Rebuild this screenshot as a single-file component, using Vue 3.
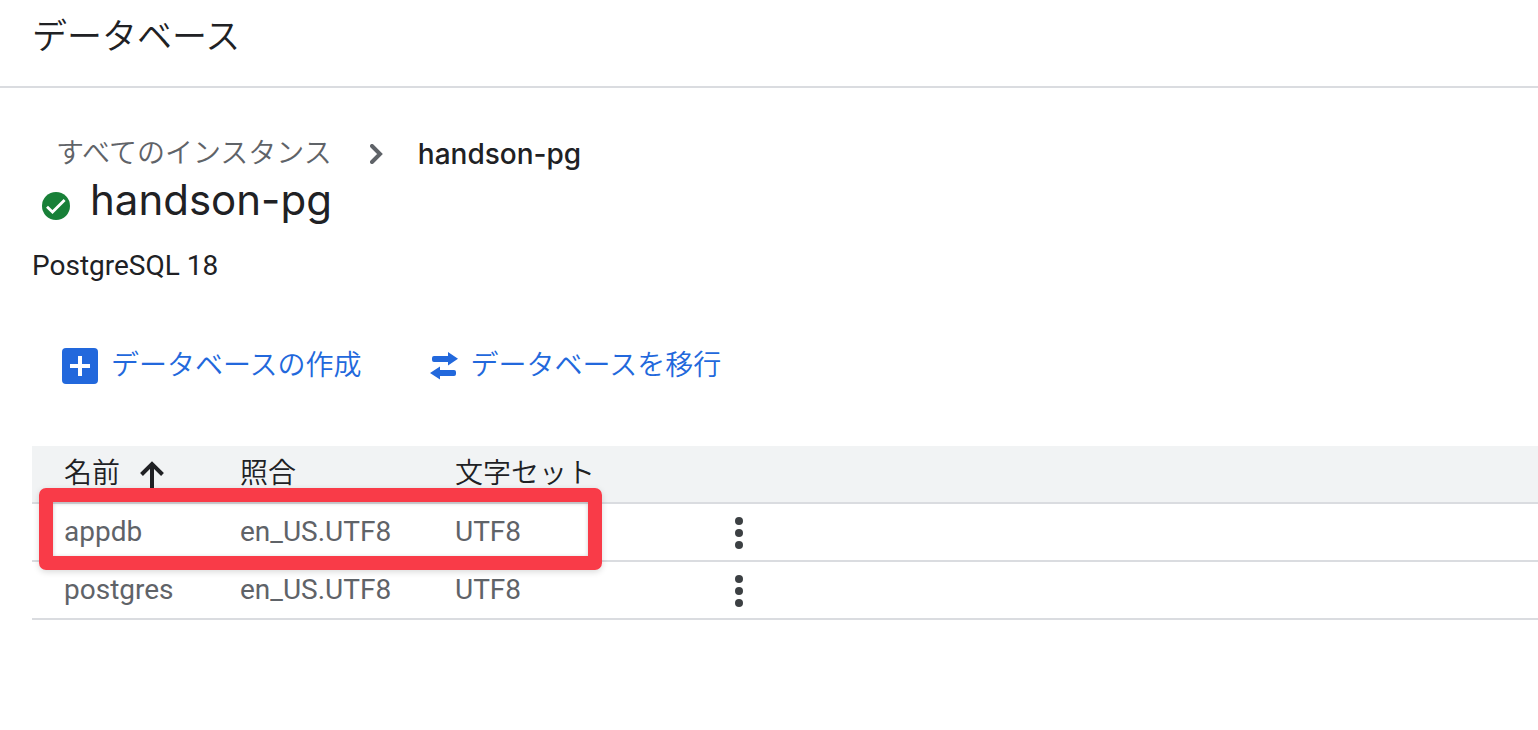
<script setup>
const databases = [
  { name: 'appdb', collation: 'en_US.UTF8', charset: 'UTF8' },
  { name: 'postgres', collation: 'en_US.UTF8', charset: 'UTF8' },
]
</script>

<template>
  <div class="page">
    <header class="topbar">
      <h1>データベース</h1>
    </header>

    <main>
      <nav class="crumbs" aria-label="パンくずリスト">
        <a href="#">すべてのインスタンス</a>
        <svg class="chevron" viewBox="0 0 14 20" width="14" height="20" aria-hidden="true">
          <path d="M2 2L10 10L2 18" fill="none" stroke="#5f6368" stroke-width="4" stroke-linecap="round" />
        </svg>
        <span class="current">handson-pg</span>
      </nav>

      <div class="instance">
        <svg viewBox="0 0 28 28" width="28" height="28" aria-hidden="true">
          <circle cx="14" cy="14" r="14" fill="#188038" />
          <path d="M5 14.8L10.500 20L22.600 8" fill="none" stroke="#fff" stroke-width="2.8" />
        </svg>
        <h2>handson-pg</h2>
      </div>
      <p class="version">PostgreSQL 18</p>

      <div class="actions">
        <button type="button">
          <svg viewBox="0 0 36 36" width="36" height="36" aria-hidden="true">
            <rect width="36" height="36" rx="4" fill="#2268dc" />
            <path d="M18 8V28M8 18H28" stroke="#fff" stroke-width="4" />
          </svg>
          データベースの作成
        </button>
        <button type="button">
          <svg viewBox="0 0 28 28" width="28" height="28" aria-hidden="true">
            <path d="M4 4H18V0L28 6.800L18 13.500V10H4Q2 10 2 8V6Q2 4 4 4Z" fill="#2268dc" />
            <path d="M24 24H10V27.500L0 21L10 14.500V18H24Q26 18 26 20V22Q26 24 24 24Z" fill="#2268dc" />
          </svg>
          データベースを移行
        </button>
      </div>

      <div class="table-area">
        <table>
          <thead>
            <tr>
              <th class="name" scope="col" aria-sort="ascending">
                <button class="sort" type="button">
                  名前
                  <svg viewBox="0 0 24 28" width="24" height="28" aria-hidden="true">
                    <path d="M12 28V4M1.500 14.500L12 4L22.500 14.500" fill="none" stroke="#202124" stroke-width="4" />
                  </svg>
                </button>
              </th>
              <th class="collation" scope="col">照合</th>
              <th class="charset" scope="col">文字セット</th>
              <td></td>
            </tr>
          </thead>
          <tbody>
            <tr v-for="db in databases" :key="db.name">
              <td>{{ db.name }}</td>
              <td>{{ db.collation }}</td>
              <td>{{ db.charset }}</td>
              <td class="menu">
                <button type="button" :aria-label="db.name + ' の操作'">
                  <svg viewBox="0 0 8 32" width="8" height="32" aria-hidden="true">
                    <g fill="#3c4043">
                      <circle cx="4" cy="4" r="4" />
                      <circle cx="4" cy="16" r="4" />
                      <circle cx="4" cy="28" r="4" />
                    </g>
                  </svg>
                </button>
              </td>
            </tr>
          </tbody>
        </table>
        <div class="highlight"></div>
      </div>
    </main>
  </div>
</template>

<style>
body {
  margin: 0;
  background: #fff;
}
</style>

<style scoped>
.page {
  color: #202124;
  font-family: Roboto, "Noto Sans CJK JP", sans-serif;
  font-size: 28px;
  line-height: 40px;
  overflow: hidden;
}
h1, h2, p {
  margin: 0;
  font-weight: 400;
}
button {
  margin: 0;
  padding: 0;
  border: 0;
  background: none;
  color: inherit;
  font: inherit;
  cursor: pointer;
}
svg {
  display: block;
  flex: none;
}
.topbar {
  padding: 14px 32px 24px;
  border-bottom: 2px solid #dadce0;
}
h1 {
  font-size: 35px;
  font-weight: 350;
  line-height: 48px;
}
main {
  padding: 46px 0 0 32px;
}
.crumbs {
  display: flex;
  align-items: center;
  padding-left: 24px;
}
.crumbs a {
  color: #5f6368;
  font-weight: 350;
  text-decoration: none;
}
.chevron {
  margin: 0 34px 0 38px;
}
.current {
  font-family: Inter, sans-serif;
  font-weight: 500;
}
.instance {
  display: flex;
  align-items: center;
  gap: 20px;
  padding-left: 10px;
}
.instance svg {
  margin-top: 12px;
}
h2 {
  font-family: Inter, sans-serif;
  font-size: 42px;
  line-height: 52px;
}
.version {
  margin-top: 20px;
}
.actions {
  display: flex;
  gap: 68px;
  padding: 60px 0 60px 30px;
  color: #2268dc;
  font-weight: 350;
}
.actions button {
  display: flex;
  align-items: center;
  gap: 13px;
}
.table-area {
  position: relative;
}
table {
  width: 100%;
  border-collapse: separate;
  border-spacing: 0;
  table-layout: fixed;
}
th, td {
  box-sizing: border-box;
  height: 58px;
  padding: 0 0 0 32px;
  border-bottom: 2px solid #dadce0;
  text-align: left;
  vertical-align: middle;
}
thead {
  background: #f1f3f4;
}
th {
  font-weight: 350;
}
tbody {
  color: #5f6368;
}
.name {
  width: 176px;
}
.collation {
  width: 215px;
}
.charset {
  width: 280px;
}
.sort {
  display: flex;
  align-items: center;
  gap: 20px;
}
.menu {
  padding-top: 2px;
}
.menu button {
  display: block;
}
.highlight {
  position: absolute;
  top: 42px;
  left: 7px;
  box-sizing: border-box;
  width: 563px;
  height: 82px;
  border: 14px solid #f93b48;
  border-radius: 7px;
  box-shadow: 0 2px 6px rgba(0, 0, 0, 0.15), inset 0 1px 4px rgba(0, 0, 0, 0.2);
  pointer-events: none;
}
</style>
